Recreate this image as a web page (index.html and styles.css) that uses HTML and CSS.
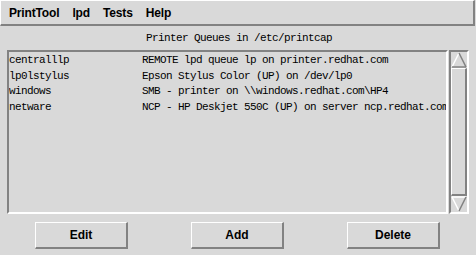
FILE: index.html
```html
<!DOCTYPE html>
<html>
<head>
<meta charset="utf-8">
<link rel="stylesheet" href="styles.css">
</head>
<body>
<div class="menubar">
  <span class="menu-item">PrintTool</span>
  <span class="menu-item">lpd</span>
  <span class="menu-item">Tests</span>
  <span class="menu-item">Help</span>
</div>
<div class="title">Printer Queues in /etc/printcap</div>
<div class="main">
  <div class="list">
    <div class="row"><span class="name">centralllp</span><span class="desc">REMOTE lpd queue lp on printer.redhat.com</span></div>
    <div class="row"><span class="name">lp0lstylus</span><span class="desc">Epson Stylus Color (UP) on /dev/lp0</span></div>
    <div class="row"><span class="name">windows</span><span class="desc">SMB - printer on \\windows.redhat.com\HP4</span></div>
    <div class="row"><span class="name">netware</span><span class="desc">NCP - HP Deskjet 550C (UP) on server ncp.redhat.com</span></div>
  </div>
  <div class="scrollbar">
    <svg class="arrow" width="16" height="16" viewBox="0 0 16 16">
      <polygon points="8,1 15,15 1,15" fill="#d9d9d9"/>
      <line x1="8" y1="1" x2="1" y2="15" stroke="#ffffff" stroke-width="1.5"/>
      <line x1="8" y1="1" x2="15" y2="15" stroke="#828282" stroke-width="1.5"/>
      <line x1="1" y1="15" x2="15" y2="15" stroke="#828282" stroke-width="1.5"/>
    </svg>
    <div class="slider"></div>
    <svg class="arrow" width="16" height="16" viewBox="0 0 16 16">
      <polygon points="1,1 15,1 8,15" fill="#d9d9d9"/>
      <line x1="1" y1="1" x2="15" y2="1" stroke="#ffffff" stroke-width="1.5"/>
      <line x1="1" y1="1" x2="8" y2="15" stroke="#ffffff" stroke-width="1.5"/>
      <line x1="15" y1="1" x2="8" y2="15" stroke="#828282" stroke-width="1.5"/>
    </svg>
  </div>
</div>
<div class="buttons">
  <div class="btn">Edit</div>
  <div class="btn">Add</div>
  <div class="btn">Delete</div>
</div>
</body>
</html>
```
FILE: styles.css
```css
html, body {
  margin: 0;
  padding: 0;
  background: #d9d9d9;
}
body {
  width: 476px;
  height: 255px;
  overflow: hidden;
  font-family: "Liberation Sans", Arial, sans-serif;
  color: #000;
}
.menubar {
  box-sizing: border-box;
  width: 475px;
  height: 26px;
  border-top: 1px solid #ffffff;
  border-left: 1px solid #ffffff;
  border-bottom: 2px solid #828282;
  border-right: 2px solid #828282;
  display: flex;
  align-items: center;
  gap: 13px;
  padding-left: 8px;
  padding-top: 1px;
  font-weight: bold;
  font-size: 12px;
  letter-spacing: -0.15px;
}
.title {
  font-family: "Liberation Mono", monospace;
  font-size: 11px;
  letter-spacing: -0.6px;
  text-align: center;
  height: 24px;
  line-height: 25px;
  padding-left: 2px;
}
.main {
  display: flex;
  padding-left: 7px;
  height: 164px;
}
.list {
  box-sizing: border-box;
  width: 441px;
  height: 164px;
  padding-top: 1px;
  border-top: 2px solid #828282;
  border-left: 2px solid #828282;
  border-bottom: 2px solid #ffffff;
  border-right: 2px solid #ffffff;
  overflow: hidden;
  font-family: "Liberation Mono", monospace;
  font-size: 11px;
  letter-spacing: -0.6px;
  white-space: nowrap;
}
.row {
  height: 15.67px;
  line-height: 15.67px;
  display: flex;
}
.name {
  width: 133px;
  flex: none;
}
.scrollbar {
  box-sizing: border-box;
  margin-left: 1px;
  width: 20px;
  height: 164px;
  border-top: 2px solid #828282;
  border-left: 2px solid #828282;
  border-bottom: 2px solid #ffffff;
  border-right: 2px solid #ffffff;
  display: flex;
  flex-direction: column;
}
.arrow {
  display: block;
  flex: none;
}
.slider {
  box-sizing: border-box;
  flex: 1;
  border-top: 1px solid #ffffff;
  border-left: 1px solid #ffffff;
  border-bottom: 2px solid #828282;
  border-right: 2px solid #828282;
}
.buttons {
  display: flex;
  gap: 63px;
  padding-left: 35px;
  margin-top: 8px;
}
.btn {
  box-sizing: border-box;
  width: 93px;
  height: 27px;
  border-top: 1px solid #ffffff;
  border-left: 1px solid #ffffff;
  border-bottom: 2px solid #828282;
  border-right: 2px solid #828282;
  font-weight: bold;
  font-size: 12px;
  display: flex;
  align-items: center;
  justify-content: center;
}
```
